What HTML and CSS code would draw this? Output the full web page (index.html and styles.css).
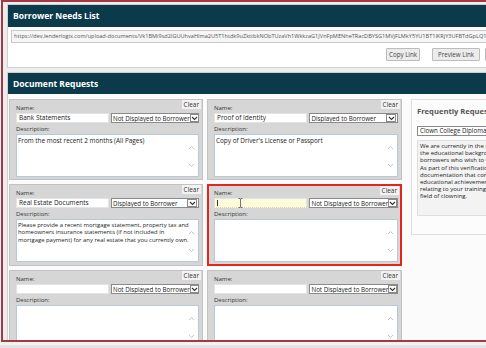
FILE: index.html
```html
<!DOCTYPE html>
<html lang="en">
<head>
    <meta charset="UTF-8">
    <meta name="viewport" content="width=device-width, initial-scale=1.0">
    <title>Borrower Needs List</title>
    <link rel="stylesheet" href="styles.css">
</head>
<body>
    <div class="frame">
        <div class="panel needs">
            <div class="panel-head">Borrower Needs List</div>
            <div class="needs-body">
                <div class="url">https://dev.lenderlogix.com/upload-documents/Vk1BMi9sd2lGUUhvaHlma2U5T1htdk9uZkttbkNObTUzaVh1WkkzaG1JVnFpMENheTRacDBYSG1MVjFLMkY5YU1BT1lKRjY3UFBTdGpLQ1BsT0</div>
                <div class="link-actions">
                    <button class="btn copy">Copy Link</button>
                    <button class="btn preview">Preview Link</button>
                    <button class="btn">Close</button>
                </div>
            </div>
        </div>

        <div class="panel docs">
            <div class="panel-head">Document Requests</div>
            <div class="docs-body">
                <div class="cards">
                    <div class="card">
                        <button class="clear">Clear</button>
                        <div class="lbl">Name:</div>
                        <div class="name-row">
                            <div class="field">Bank Statements</div>
                            <div class="select"><span>Not Displayed to Borrower</span><i class="arrow"><svg width="7" height="5" viewBox="0 0 7 5"><path d="M1 1l2.5 2.5L6 1" fill="none" stroke="#333" stroke-width="1.1"/></svg></i></div>
                        </div>
                        <div class="lbl">Description:</div>
                        <div class="area">
                            <div class="area-text">From the most recent 2 months (All Pages)</div>
                            <div class="scroll">
                                <svg width="7" height="5" viewBox="0 0 7 5"><path d="M1 4l2.5-2.5L6 4" fill="none" stroke="#c4c4c4" stroke-width="1"/></svg>
                                <svg width="7" height="5" viewBox="0 0 7 5"><path d="M1 1l2.5 2.5L6 1" fill="none" stroke="#c4c4c4" stroke-width="1"/></svg>
                            </div>
                        </div>
                    </div>

                    <div class="card">
                        <button class="clear">Clear</button>
                        <div class="lbl">Name:</div>
                        <div class="name-row">
                            <div class="field">Proof of Identity</div>
                            <div class="select"><span>Displayed to Borrower</span><i class="arrow"><svg width="7" height="5" viewBox="0 0 7 5"><path d="M1 1l2.5 2.5L6 1" fill="none" stroke="#333" stroke-width="1.1"/></svg></i></div>
                        </div>
                        <div class="lbl">Description:</div>
                        <div class="area">
                            <div class="area-text">Copy of Driver's License or Passport</div>
                            <div class="scroll">
                                <svg width="7" height="5" viewBox="0 0 7 5"><path d="M1 4l2.5-2.5L6 4" fill="none" stroke="#c4c4c4" stroke-width="1"/></svg>
                                <svg width="7" height="5" viewBox="0 0 7 5"><path d="M1 1l2.5 2.5L6 1" fill="none" stroke="#c4c4c4" stroke-width="1"/></svg>
                            </div>
                        </div>
                    </div>

                    <div class="card">
                        <button class="clear">Clear</button>
                        <div class="lbl">Name:</div>
                        <div class="name-row">
                            <div class="field">Real Estate Documents</div>
                            <div class="select"><span>Displayed to Borrower</span><i class="arrow"><svg width="7" height="5" viewBox="0 0 7 5"><path d="M1 1l2.5 2.5L6 1" fill="none" stroke="#333" stroke-width="1.1"/></svg></i></div>
                        </div>
                        <div class="lbl">Description:</div>
                        <div class="area">
                            <div class="area-text narrow">Please provide a recent mortgage statement, property tax and<br>homeowners insurance statements (if not included in<br>mortgage payment) for any real estate that you currently own.</div>
                            <div class="scroll">
                                <svg width="7" height="5" viewBox="0 0 7 5"><path d="M1 4l2.5-2.5L6 4" fill="none" stroke="#c4c4c4" stroke-width="1"/></svg>
                                <svg width="7" height="5" viewBox="0 0 7 5"><path d="M1 1l2.5 2.5L6 1" fill="none" stroke="#c4c4c4" stroke-width="1"/></svg>
                            </div>
                        </div>
                    </div>

                    <div class="card active">
                        <button class="clear">Clear</button>
                        <div class="lbl">Name:</div>
                        <div class="name-row">
                            <div class="field focus"><span class="caret"></span>
                                <svg class="ibeam" width="5" height="10" viewBox="0 0 5 10"><path d="M0.5 0.5h1.5l0.5 0.6 0.5-0.6h1.5M2.5 1v8M0.5 9.5h1.5l0.5-0.6 0.5 0.6h1.5" fill="none" stroke="#555" stroke-width="0.8"/></svg>
                            </div>
                            <div class="select"><span>Not Displayed to Borrower</span><i class="arrow"><svg width="7" height="5" viewBox="0 0 7 5"><path d="M1 1l2.5 2.5L6 1" fill="none" stroke="#333" stroke-width="1.1"/></svg></i></div>
                        </div>
                        <div class="lbl">Description:</div>
                        <div class="area">
                            <div class="area-text"></div>
                            <div class="scroll">
                                <svg width="7" height="5" viewBox="0 0 7 5"><path d="M1 4l2.5-2.5L6 4" fill="none" stroke="#c4c4c4" stroke-width="1"/></svg>
                                <svg width="7" height="5" viewBox="0 0 7 5"><path d="M1 1l2.5 2.5L6 1" fill="none" stroke="#c4c4c4" stroke-width="1"/></svg>
                            </div>
                        </div>
                    </div>

                    <div class="card">
                        <button class="clear">Clear</button>
                        <div class="lbl">Name:</div>
                        <div class="name-row">
                            <div class="field"></div>
                            <div class="select"><span>Not Displayed to Borrower</span><i class="arrow"><svg width="7" height="5" viewBox="0 0 7 5"><path d="M1 1l2.5 2.5L6 1" fill="none" stroke="#333" stroke-width="1.1"/></svg></i></div>
                        </div>
                        <div class="lbl">Description:</div>
                        <div class="area">
                            <div class="area-text"></div>
                            <div class="scroll">
                                <svg width="7" height="5" viewBox="0 0 7 5"><path d="M1 4l2.5-2.5L6 4" fill="none" stroke="#c4c4c4" stroke-width="1"/></svg>
                                <svg width="7" height="5" viewBox="0 0 7 5"><path d="M1 1l2.5 2.5L6 1" fill="none" stroke="#c4c4c4" stroke-width="1"/></svg>
                            </div>
                        </div>
                    </div>

                    <div class="card">
                        <button class="clear">Clear</button>
                        <div class="lbl">Name:</div>
                        <div class="name-row">
                            <div class="field"></div>
                            <div class="select"><span>Not Displayed to Borrower</span><i class="arrow"><svg width="7" height="5" viewBox="0 0 7 5"><path d="M1 1l2.5 2.5L6 1" fill="none" stroke="#333" stroke-width="1.1"/></svg></i></div>
                        </div>
                        <div class="lbl">Description:</div>
                        <div class="area">
                            <div class="area-text"></div>
                            <div class="scroll">
                                <svg width="7" height="5" viewBox="0 0 7 5"><path d="M1 4l2.5-2.5L6 4" fill="none" stroke="#c4c4c4" stroke-width="1"/></svg>
                                <svg width="7" height="5" viewBox="0 0 7 5"><path d="M1 1l2.5 2.5L6 1" fill="none" stroke="#c4c4c4" stroke-width="1"/></svg>
                            </div>
                        </div>
                    </div>
                </div>

                <aside class="freq">
                    <div class="freq-title">Frequently Requested Documents</div>
                    <div class="freq-select">Clown College Diploma</div>
                    <div class="freq-text">We are currently in the process of verifying<br>the educational background of all<br>borrowers who wish to claim a degree.<br>As part of this verification, please provide<br>documentation that confirms your<br>educational achievements, including records<br>relating to your training at a school in the<br>field of clowning.</div>
                </aside>
            </div>
        </div>
    </div>
    <div class="taskbar"></div>
</body>
</html>
```

FILE: styles.css
```css
html, body {
    margin: 0;
    height: 348px;
    overflow: hidden;
    background: #f4f1f1;
}
body {
    font-family: "Open Sans", "Liberation Sans", sans-serif;
    color: #222;
}
.frame {
    margin-left: 1px;
    width: 600px;
    height: 336px;
    border: 2px solid #a23a45;
    border-right: none;
    padding: 2px 0 0 4px;
    background: #ededed;
    overflow: hidden;
}
.taskbar {
    margin-top: 3px;
    height: 7px;
    background: #e3e3e3;
}
.panel {
    background: #fff;
    border: 1px solid #d0d0d0;
    border-right: none;
}
.panel-head {
    background: #0b3a4a;
    color: #fff;
    font-weight: 700;
    font-size: 8.5px;
    padding: 0 5px;
}
.needs .panel-head {
    height: 22px;
    line-height: 22px;
}
.needs-body {
    padding: 3px 0 6px 3px;
}
.url {
    height: 11px;
    line-height: 11px;
    border: 1px solid #c9c9c9;
    background: #f6f6f6;
    color: #555;
    font-size: 5.6px;
    padding-left: 2px;
    width: 560px;
    overflow: hidden;
    white-space: nowrap;
}
.link-actions {
    display: flex;
    margin-top: 5px;
    padding-left: 375px;
}
.btn {
    font-family: inherit;
    font-size: 6.2px;
    color: #444;
    height: 13px;
    padding: 0 2px;
    border: 1px solid #bcbcbc;
    background: #ececec;
    border-radius: 1px;
    white-space: nowrap;
}
.btn.copy {
    width: 34px;
    margin-right: 12px;
}
.btn.preview {
    width: 48px;
    margin-right: 5px;
}

.docs {
    margin-top: 4px;
    height: 400px;
}
.docs .panel-head {
    height: 21px;
    line-height: 21px;
}
.docs-body {
    display: flex;
    align-items: flex-start;
    gap: 9px;
    padding: 5px 0 0 1px;
    background: #fbfbfb;
}
.cards {
    display: grid;
    grid-template-columns: 194px 195px;
    gap: 4px;
}
.card {
    position: relative;
    background: #d6d6d6;
    border: 1px solid #c2c2c2;
    padding: 5px 3px 2px 6px;
}
.card.active {
    border: 2px solid #e3261c;
    padding: 4px 2px 2px 5px;
}
.clear {
    position: absolute;
    top: 0;
    right: 1px;
    height: 9px;
    padding: 0 2px;
    font-family: inherit;
    font-size: 6.4px;
    line-height: 9px;
    color: #333;
    background: #f2f2f2;
    border: none;
}
.lbl {
    font-size: 6px;
    line-height: 7px;
    color: #333;
}
.name-row {
    display: flex;
    gap: 2px;
    margin: 1px 0 3px;
}
.field {
    position: relative;
    width: 90px;
    height: 8px;
    border: 1px solid #e4e4e4;
    background: #fff;
    font-size: 6.5px;
    line-height: 8px;
    padding-left: 2px;
    color: #222;
    white-space: nowrap;
    overflow: hidden;
}
.field.focus {
    background: #fcfbdc;
    border-bottom: 1px dotted #d8d49a;
    overflow: visible;
}
.caret {
    display: inline-block;
    width: 1px;
    height: 6px;
    background: #333;
    vertical-align: middle;
}
.ibeam {
    position: absolute;
    left: 23px;
    top: -1px;
}
.select {
    display: flex;
    align-items: center;
    justify-content: space-between;
    width: 86px;
    height: 8px;
    border: 1px solid #8a8a8a;
    background: #fff;
    font-size: 6.2px;
    padding-left: 1px;
    white-space: nowrap;
    overflow: hidden;
}
.arrow {
    display: flex;
    align-items: center;
    justify-content: center;
    width: 8px;
    height: 6px;
    margin-right: 1px;
    border: 1px solid #8a8a8a;
}
.area {
    display: flex;
    height: 41px;
    margin-top: 1px;
    border: 1px solid #b9c8d6;
    background: #fff;
}
.area-text {
    flex: 1;
    min-width: 0;
    padding: 2px 1px;
    font-size: 6.4px;
    line-height: 7.4px;
    color: #222;
    white-space: nowrap;
}
.area-text.narrow {
    font-size: 5.9px;
}
.scroll {
    display: flex;
    flex-direction: column;
    justify-content: space-between;
    padding: 10px 3px 8px 0;
}

.freq {
    width: 160px;
    height: 136px;
    border: 1px solid #e0e0e0;
    background: #fcfcfc;
    padding: 0 0 0 5px;
    box-sizing: border-box;
}
.freq-title {
    font-weight: 700;
    font-size: 7.6px;
    color: #555;
    line-height: 22px;
    white-space: nowrap;
}
.freq-select {
    margin-top: 4px;
    height: 8px;
    line-height: 8px;
    border: 1px solid #8a8a8a;
    font-size: 6.2px;
    padding-left: 2px;
    background: #fff;
    white-space: nowrap;
}
.freq-text {
    margin-top: 4px;
    height: 70px;
    border: 1px solid #dedede;
    background: #f3f3f3;
    padding: 2px 2px;
    font-size: 6px;
    line-height: 7.2px;
    white-space: nowrap;
}
```
